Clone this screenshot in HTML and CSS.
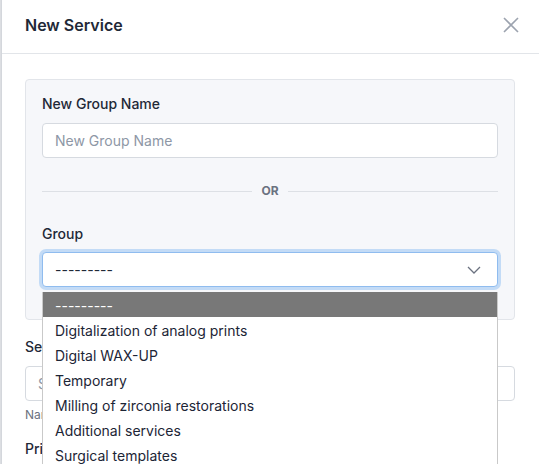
FILE: index.html
```html
<!DOCTYPE html>
<html lang="en">
<head>
    <meta charset="UTF-8">
    <meta name="viewport" content="width=device-width, initial-scale=1.0">
    <title>New Service</title>
    <link rel="stylesheet" href="styles.css">
</head>
<body>
    <div class="modal">
        <div class="modal-header">
            <h2>New Service</h2>
            <button class="close" type="button" aria-label="Close">
                <svg width="16" height="16" viewBox="0 0 16 16">
                    <path d="M1 1 L15 15 M15 1 L1 15" stroke="#9ca3af" stroke-width="1.6" fill="none"/>
                </svg>
            </button>
        </div>
        <div class="modal-body">
            <div class="panel">
                <div class="field">
                    <label for="group_name">New Group Name</label>
                    <input type="text" id="group_name" placeholder="New Group Name">
                </div>
                <div class="divider"><span>OR</span></div>
                <div class="field">
                    <label for="group">Group</label>
                    <div class="select-wrap">
                        <div class="select" id="group">
                            <span>---------</span>
                            <svg width="14" height="8" viewBox="0 0 14 8">
                                <path d="M1 1 L7 7 L13 1" stroke="#6b7280" stroke-width="1.3" fill="none"/>
                            </svg>
                        </div>
                        <ul class="options">
                            <li class="selected">---------</li>
                            <li>Digitalization of analog prints</li>
                            <li>Digital WAX-UP</li>
                            <li>Temporary</li>
                            <li>Milling of zirconia restorations</li>
                            <li>Additional services</li>
                            <li>Surgical templates</li>
                        </ul>
                    </div>
                </div>
            </div>
            <div class="field outer-field">
                <label for="service_name">Service</label>
                <input type="text" id="service_name" placeholder="S">
                <p class="help">Name</p>
            </div>
            <div class="field outer-field">
                <label for="price">Price</label>
            </div>
        </div>
    </div>
</body>
</html>
```

FILE: styles.css
```css
* {
    margin: 0;
    padding: 0;
    box-sizing: border-box;
}
body {
    font-family: Inter, "Noto Sans", sans-serif;
    background-color: #dcdee2;
    padding-left: 1px;
    height: 464px;
    overflow: hidden;
    color: #1f2937;
}
.modal {
    background-color: white;
    border-left: 1px solid #d4d7dc;
    height: 100%;
}
.modal-header {
    height: 54px;
    border-bottom: 1px solid #e2e5e9;
    display: flex;
    justify-content: space-between;
    align-items: center;
    padding: 0 20px 0 23px;
}
.modal-header h2 {
    font-size: 16px;
    font-weight: 600;
    color: #1f2937;
    margin-top: -4px;
}
.close {
    background: none;
    border: none;
    display: flex;
    margin-top: -4px;
}
.modal-body {
    padding: 25px 24px 0 23px;
}
.panel {
    background-color: #f6f7fa;
    border: 1px solid #e2e5ea;
    border-radius: 4px;
    padding: 14px 16px 32px 16px;
}
.field label {
    display: block;
    font-size: 14px;
    line-height: 20px;
    font-weight: 500;
    color: #1f2937;
}
.field input {
    display: block;
    width: 100%;
    height: 35px;
    margin-top: 9px;
    border: 1px solid #d6dae0;
    border-radius: 4px;
    padding: 0 12px;
    font-family: inherit;
    font-size: 14px;
    background: white;
}
.field input::placeholder {
    color: #8e97a6;
}
.divider {
    display: flex;
    align-items: center;
    gap: 9px;
    margin: 25px 0 25px 0;
    font-size: 12px;
    line-height: 16px;
    font-weight: 700;
    color: #6b7280;
}
.divider::before, .divider::after {
    content: "";
    flex: 1;
    border-top: 1px solid #dde0e5;
}
.select-wrap {
    position: relative;
    margin-top: 8px;
}
.select {
    height: 35px;
    border: 1px solid #8fbcef;
    border-radius: 4px;
    box-shadow: 0 0 0 3px #c3dbf6;
    background: white;
    display: flex;
    justify-content: space-between;
    align-items: center;
    padding: 0 16px 0 12px;
    font-size: 14px;
    color: #1f2937;
}
.options {
    position: absolute;
    top: 40px;
    left: 0;
    width: 100%;
    list-style: none;
    background: white;
    border-left: 1px solid #c9c9c9;
    border-right: 1px solid #c9c9c9;
    z-index: 10;
}
.options li {
    height: 25px;
    line-height: 23px;
    padding: 2px 0 0 12px;
    font-size: 14px;
    color: #1c2536;
}
.options li.selected {
    background-color: #787878;
    color: white;
}
.outer-field {
    margin-top: 17px;
}
.help {
    font-size: 12px;
    color: #6b7280;
    margin-top: 6px;
}
```
